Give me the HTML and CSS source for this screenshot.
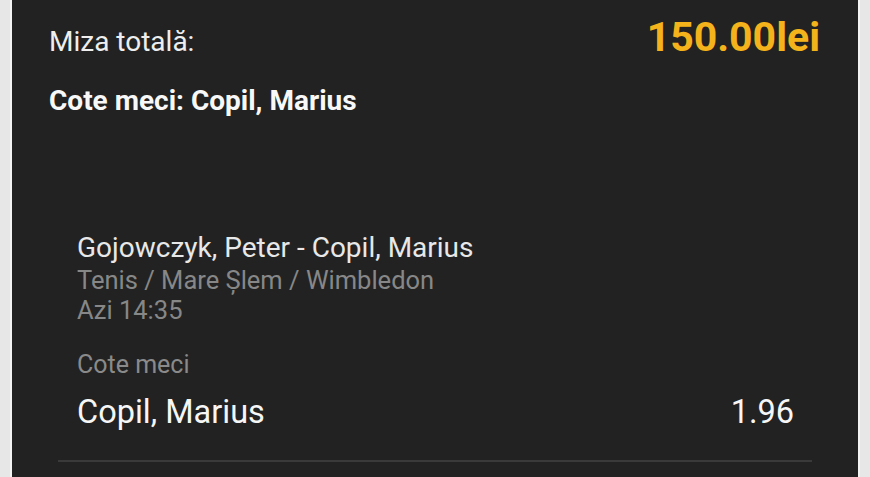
FILE: index.html
```html
<!DOCTYPE html>
<html lang="ro">
<head>
<meta charset="utf-8">
<link rel="stylesheet" href="styles.css">
</head>
<body>
<div class="frame">
  <div class="panel">
    <div class="total-row">
      <span class="total-label">Miza totală:</span>
      <span class="total-value">150.00lei</span>
    </div>
    <div class="bet-title">Cote meci: Copil, Marius</div>
    <div class="event">
      <div class="event-body">
        <div class="event-name">Gojowczyk, Peter - Copil, Marius</div>
        <div class="event-meta">Tenis / Mare Șlem / Wimbledon</div>
        <div class="event-meta">Azi 14:35</div>
        <div class="market">Cote meci</div>
        <div class="pick-row">
          <span class="pick">Copil, Marius</span>
          <span class="odd">1.96</span>
        </div>
      </div>
      <div class="divider"></div>
    </div>
  </div>
</div>
</body>
</html>
```
FILE: styles.css
```css
html, body {
  margin: 0;
  padding: 0;
  height: 100%;
  background: #e7e7e7;
  overflow: hidden;
}
.frame {
  height: 100%;
  padding: 0 10px;
  box-sizing: border-box;
}
.panel {
  height: 100%;
  background: #222222;
  border-left: 2px solid #f4f4f4;
  border-right: 2px solid #f4f4f4;
  box-sizing: border-box;
  font-family: Roboto, "Noto Sans", sans-serif;
  padding: 0 38px 0 37px;
}
.total-row {
  display: flex;
  justify-content: space-between;
  align-items: baseline;
  padding-top: 13px;
}
.total-label {
  font-size: 28px;
  color: #eeeeee;
}
.total-value {
  font-size: 41px;
  font-weight: 700;
  color: #f4b31a;
}
.bet-title {
  margin-top: 23px;
  font-size: 28px;
  font-weight: 700;
  color: #f8f8f8;
}
.event {
  margin: 114px 8px 0 9px;
}
.event-body {
  padding: 0 18px 0 19px;
}
.event-name {
  font-size: 28px;
  line-height: 34px;
  color: #e8e8e8;
}
.event-meta {
  font-size: 25.5px;
  line-height: 30px;
  color: #878787;
}
.market {
  margin-top: 25px;
  font-size: 25px;
  color: #8a8a8a;
}
.pick-row {
  display: flex;
  justify-content: space-between;
  margin-top: 14px;
  font-size: 32.5px;
  color: #f6f6f6;
}
.divider {
  margin-top: 29px;
  height: 2px;
  background: #3a3a3a;
}
```
